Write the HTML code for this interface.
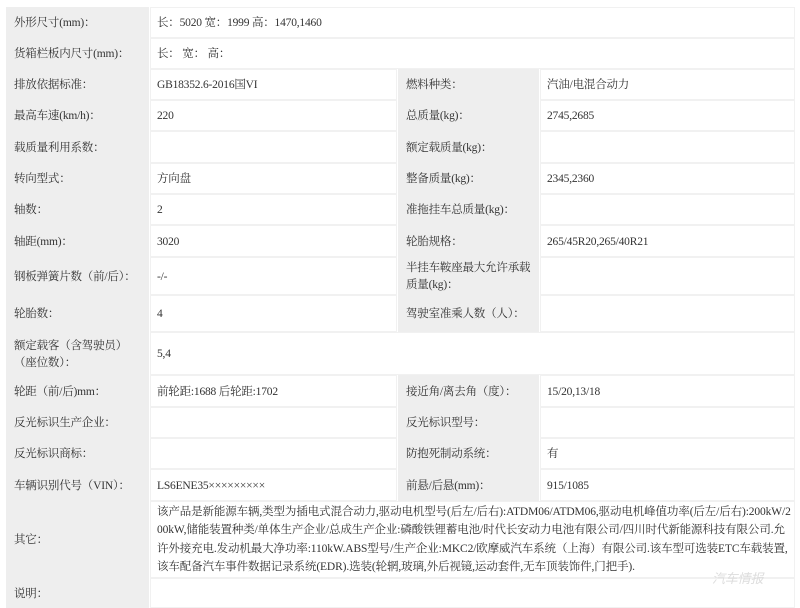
<!DOCTYPE html>
<html><head><meta charset="utf-8"><style>
body{margin:0;width:800px;height:604px;background:#fff;position:relative;overflow:hidden;font-family:"Liberation Serif","Noto Serif CJK SC",serif;font-size:11.5px;color:#333;letter-spacing:-0.2px}
.c{position:absolute;box-sizing:border-box;display:flex;align-items:center;padding:2px 2px 0 6px;line-height:17px}
.l{background:#eeeeee;padding-left:8px}
.v{background:#fff;border:1px solid #f1f1f1}
.o{word-break:break-all;line-height:18.5px;letter-spacing:-0.12px}
</style></head><body>
<div class="c l" style="left:6px;top:7px;width:143px;height:31px">外形尺寸(mm)：</div>
<div class="c v" style="left:150px;top:7px;width:645px;height:31px">长：5020 宽：1999 高：1470,1460</div>
<div class="c l" style="left:6px;top:38px;width:143px;height:31px">货箱栏板内尺寸(mm)：</div>
<div class="c v" style="left:150px;top:38px;width:645px;height:31px">长： 宽： 高：</div>

<div class="c l" style="left:6px;top:69px;width:143px;height:31px">排放依据标准：</div>
<div class="c v" style="left:150px;top:69px;width:247px;height:31px">GB18352.6-2016国VI</div>
<div class="c l" style="left:398px;top:69px;width:141px;height:31px">燃料种类：</div>
<div class="c v" style="left:540px;top:69px;width:255px;height:31px">汽油/电混合动力</div>

<div class="c l" style="left:6px;top:100px;width:143px;height:31px">最高车速(km/h)：</div>
<div class="c v" style="left:150px;top:100px;width:247px;height:31px">220</div>
<div class="c l" style="left:398px;top:100px;width:141px;height:31px">总质量(kg)：</div>
<div class="c v" style="left:540px;top:100px;width:255px;height:31px">2745,2685</div>

<div class="c l" style="left:6px;top:131px;width:143px;height:32px">载质量利用系数：</div>
<div class="c v" style="left:150px;top:131px;width:247px;height:32px"></div>
<div class="c l" style="left:398px;top:131px;width:141px;height:32px">额定载质量(kg)：</div>
<div class="c v" style="left:540px;top:131px;width:255px;height:32px"></div>

<div class="c l" style="left:6px;top:163px;width:143px;height:31px">转向型式：</div>
<div class="c v" style="left:150px;top:163px;width:247px;height:31px">方向盘</div>
<div class="c l" style="left:398px;top:163px;width:141px;height:31px">整备质量(kg)：</div>
<div class="c v" style="left:540px;top:163px;width:255px;height:31px">2345,2360</div>

<div class="c l" style="left:6px;top:194px;width:143px;height:31px">轴数：</div>
<div class="c v" style="left:150px;top:194px;width:247px;height:31px">2</div>
<div class="c l" style="left:398px;top:194px;width:141px;height:31px">准拖挂车总质量(kg)：</div>
<div class="c v" style="left:540px;top:194px;width:255px;height:31px"></div>

<div class="c l" style="left:6px;top:225px;width:143px;height:32px">轴距(mm)：</div>
<div class="c v" style="left:150px;top:225px;width:247px;height:32px">3020</div>
<div class="c l" style="left:398px;top:225px;width:141px;height:32px">轮胎规格：</div>
<div class="c v" style="left:540px;top:225px;width:255px;height:32px">265/45R20,265/40R21</div>

<div class="c l" style="left:6px;top:257px;width:143px;height:38px;white-space:nowrap">钢板弹簧片数（前/后）：</div>
<div class="c v" style="left:150px;top:257px;width:247px;height:38px">-/-</div>
<div class="c l" style="left:398px;top:257px;width:141px;height:38px">半挂车鞍座最大允许承载质量(kg)：</div>
<div class="c v" style="left:540px;top:257px;width:255px;height:38px"></div>

<div class="c l" style="left:6px;top:295px;width:143px;height:37px">轮胎数：</div>
<div class="c v" style="left:150px;top:295px;width:247px;height:37px">4</div>
<div class="c l" style="left:398px;top:295px;width:141px;height:37px;white-space:nowrap">驾驶室准乘人数（人）：</div>
<div class="c v" style="left:540px;top:295px;width:255px;height:37px"></div>

<div class="c l" style="left:6px;top:332px;width:143px;height:43px"><span>额定载客（含驾驶员）<br>（座位数）：</span></div>
<div class="c v" style="left:150px;top:332px;width:645px;height:43px">5,4</div>

<div class="c l" style="left:6px;top:375px;width:143px;height:32px">轮距（前/后)mm：</div>
<div class="c v" style="left:150px;top:375px;width:247px;height:32px">前轮距:1688 后轮距:1702</div>
<div class="c l" style="left:398px;top:375px;width:141px;height:32px">接近角/离去角（度）：</div>
<div class="c v" style="left:540px;top:375px;width:255px;height:32px">15/20,13/18</div>

<div class="c l" style="left:6px;top:407px;width:143px;height:31px">反光标识生产企业：</div>
<div class="c v" style="left:150px;top:407px;width:247px;height:31px"></div>
<div class="c l" style="left:398px;top:407px;width:141px;height:31px">反光标识型号：</div>
<div class="c v" style="left:540px;top:407px;width:255px;height:31px"></div>

<div class="c l" style="left:6px;top:438px;width:143px;height:31px">反光标识商标：</div>
<div class="c v" style="left:150px;top:438px;width:247px;height:31px"></div>
<div class="c l" style="left:398px;top:438px;width:141px;height:31px">防抱死制动系统：</div>
<div class="c v" style="left:540px;top:438px;width:255px;height:31px">有</div>

<div class="c l" style="left:6px;top:469px;width:143px;height:32px">车辆识别代号（VIN）：</div>
<div class="c v" style="left:150px;top:469px;width:247px;height:32px">LS6ENE35×××××××××</div>
<div class="c l" style="left:398px;top:469px;width:141px;height:32px">前悬/后悬(mm)：</div>
<div class="c v" style="left:540px;top:469px;width:255px;height:32px">915/1085</div>

<div class="c l" style="left:6px;top:501px;width:143px;height:77px">其它：</div>
<div class="c v o" style="left:150px;top:501px;width:645px;height:77px;padding:0 2px 0 6px">该产品是新能源车辆,类型为插电式混合动力,驱动电机型号(后左/后右):ATDM06/ATDM06,驱动电机峰值功率(后左/后右):200kW/200kW,储能装置种类/单体生产企业/总成生产企业:磷酸铁锂蓄电池/时代长安动力电池有限公司/四川时代新能源科技有限公司.允许外接充电.发动机最大净功率:110kW.ABS型号/生产企业:MKC2/欧摩威汽车系统（上海）有限公司.该车型可选装ETC车载装置,该车配备汽车事件数据记录系统(EDR).选装(轮辋,玻璃,外后视镜,运动套件,无车顶装饰件,门把手).</div>

<div class="c l" style="left:6px;top:578px;width:143px;height:30px">说明：</div>
<div class="c v" style="left:150px;top:578px;width:645px;height:30px"></div>
<div style="position:absolute;left:712px;top:568px;color:#ddd;font-family:'Liberation Sans','Noto Sans CJK SC',sans-serif;font-size:13px;font-style:italic">汽车情报</div>
</body></html>
